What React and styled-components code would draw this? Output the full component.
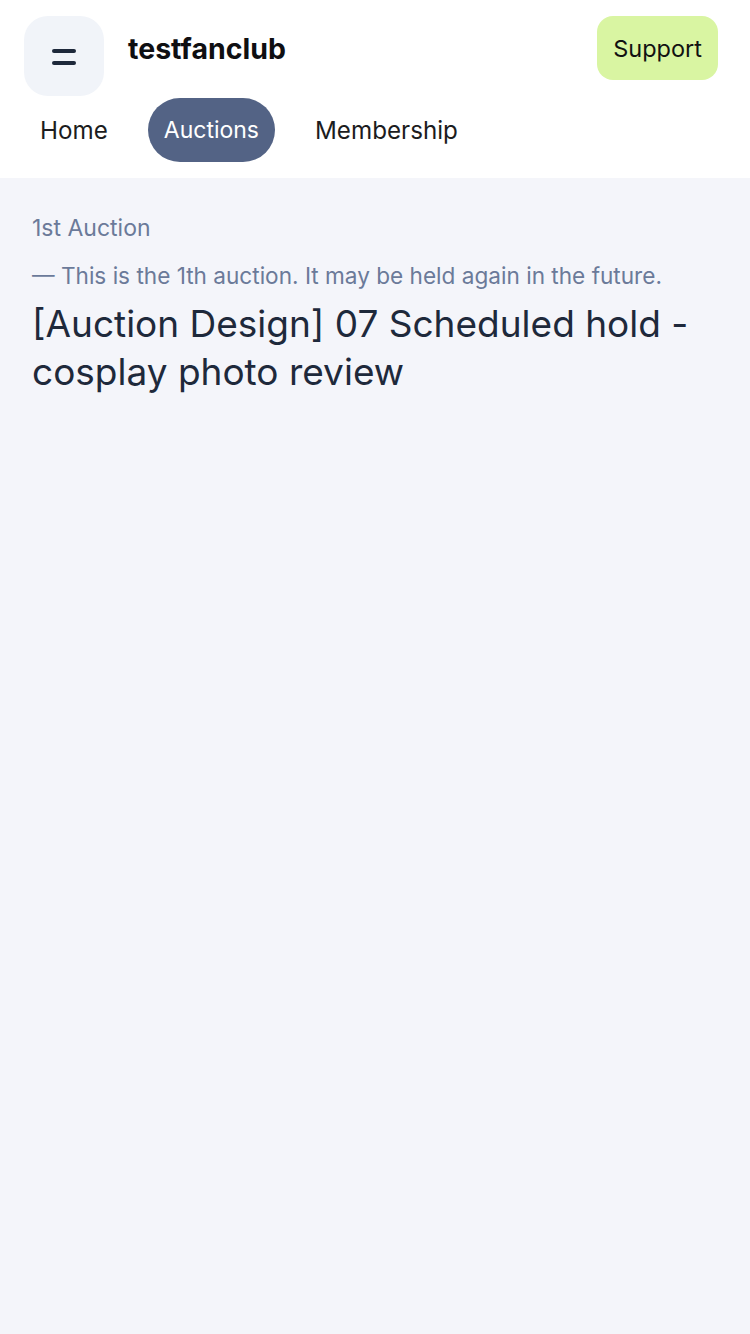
import React from "react";
import styled, { createGlobalStyle, css } from "styled-components";

const GlobalStyle = createGlobalStyle`
    html, body {
        margin: 0;
        padding: 0;
        background: #f4f5fa;
        font-family: Inter, "Noto Sans", sans-serif;
        -webkit-font-smoothing: antialiased;
    }
    #root {
        min-height: 100vh;
    }
`;

const Page = styled.div`
    min-height: 100vh;
    background: #f4f5fa;
`;

// header
const HeaderContainer = styled.header`
    background: #ffffff;
    padding: 16px 32px 16px 24px;
    display: flex;
    flex-direction: column;
    gap: 2px;
`;

const TopRow = styled.div`
    display: flex;
    align-items: flex-start;
    justify-content: space-between;
    height: 80px;
`;

const Brand = styled.div`
    display: flex;
    align-items: flex-start;
    gap: 24px;
`;

const MenuButton = styled.button`
    width: 80px;
    height: 80px;
    border: none;
    border-radius: 24px;
    background: #f1f4f9;
    display: flex;
    align-items: center;
    justify-content: center;
    cursor: pointer;
    padding: 0;
`;

const Logo = styled.p`
    margin: 0;
    height: 64px;
    display: flex;
    align-items: center;
    font-size: 28.5px;
    font-weight: 700;
    color: #0f0f12;
`;

const SupportButton = styled.button`
    height: 64px;
    padding: 0 16px;
    border: none;
    border-radius: 16px;
    background: #d9f5a2;
    color: #111111;
    font-family: Inter, "Noto Sans", sans-serif;
    font-size: 23.5px;
    cursor: pointer;
`;

const Tabs = styled.nav`
    display: flex;
    gap: 24px;
`;

const Tab = styled.a`
    height: 64px;
    padding: 0 16px;
    border-radius: 32px;
    display: flex;
    align-items: center;
    font-size: 24.2px;
    color: #1c1c20;
    text-decoration: none;
    ${(props) =>
        props.active &&
        css`
            background: #536385;
            color: #ffffff;
            font-size: 23px;
        `}
`;

// content
const Content = styled.main`
    padding: 34px 32px;
    display: flex;
    flex-direction: column;
`;

const Label = styled.p`
    margin: 0;
    font-size: 23px;
    line-height: 32px;
    color: #6b7a99;
`;

const Note = styled.p`
    margin: 16px 0 0;
    font-size: 22.6px;
    line-height: 32px;
    color: #6b7a99;
`;

const Title = styled.h1`
    margin: 8px 0 0;
    font-size: 37px;
    line-height: 48px;
    font-weight: 400;
    color: #1e293b;
`;

function Hamburger() {
    return (
        <svg width="28" height="20" viewBox="0 0 28 20">
            <rect x="2" y="3" width="24" height="4" rx="2" fill="#1e293b" />
            <rect x="2" y="15" width="24" height="4" rx="2" fill="#1e293b" />
        </svg>
    );
}

export default function App() {
    return (
        <Page>
            <GlobalStyle />
            <HeaderContainer>
                <TopRow>
                    <Brand>
                        <MenuButton>
                            <Hamburger />
                        </MenuButton>
                        <Logo>testfanclub</Logo>
                    </Brand>
                    <SupportButton>Support</SupportButton>
                </TopRow>
                <Tabs>
                    <Tab href="#">Home</Tab>
                    <Tab href="#" active>
                        Auctions
                    </Tab>
                    <Tab href="#">Membership</Tab>
                </Tabs>
            </HeaderContainer>
            <Content>
                <Label>1st Auction</Label>
                <Note>— This is the 1th auction. It may be held again in the future.</Note>
                <Title>[Auction Design] 07 Scheduled hold - cosplay photo review</Title>
            </Content>
        </Page>
    );
}
